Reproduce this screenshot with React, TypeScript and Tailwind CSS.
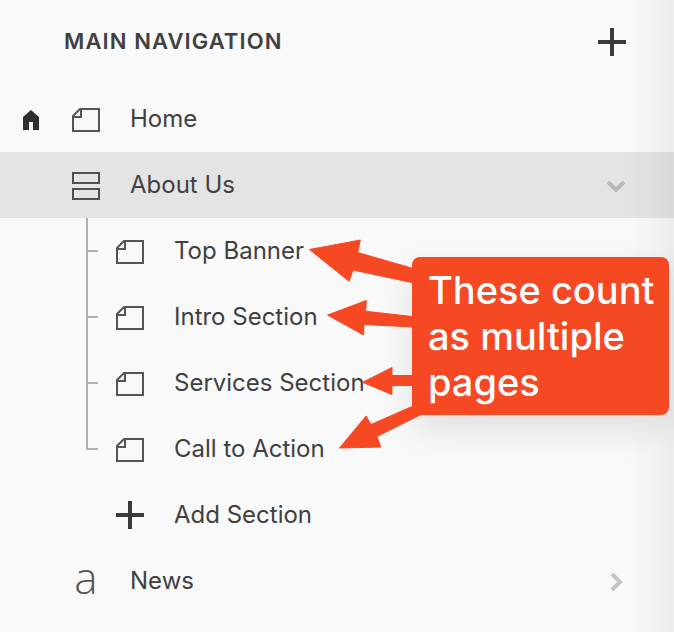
import { useState } from 'react';

type Section = { id: string; title: string };

const sections: Section[] = [
  { id: 'top-banner', title: 'Top Banner' },
  { id: 'intro', title: 'Intro Section' },
  { id: 'services', title: 'Services Section' },
  { id: 'cta', title: 'Call to Action' },
];

function PageIcon() {
  return (
    <svg className="h-7 w-7 shrink-0" viewBox="0 0 28 28" fill="none" stroke="#555" strokeWidth="2" aria-hidden="true">
      <path d="M8 3H27V25H1V10Z" />
      <path d="M9 3V11H1" />
    </svg>
  );
}

function IndexIcon() {
  return (
    <svg className="h-7 w-7 shrink-0" viewBox="0 0 28 28" fill="none" stroke="#505050" strokeWidth="2" aria-hidden="true">
      <rect x="1" y="1" width="26" height="10" />
      <rect x="1" y="17" width="26" height="10" />
    </svg>
  );
}

function PlusIcon() {
  return (
    <svg className="h-7 w-7 shrink-0" viewBox="0 0 28 28" fill="none" stroke="#3a3a3a" strokeWidth="4" aria-hidden="true">
      <path d="M14 0V28M0 14H28" />
    </svg>
  );
}

function HomeIcon() {
  return (
    <svg className="h-5 w-4" viewBox="0 0 16 20" fill="#2e2e2e" aria-label="Homepage">
      <path d="M8 0L16 7V20H10V12H6V20H0V7Z" />
    </svg>
  );
}

// Vertical trunk with a short branch pointing at the section
function Branch({ last }: { last: boolean }) {
  return (
    <div className="flex w-3 shrink-0 flex-col self-stretch">
      <div className="h-[34px] border-b-2 border-l-2 border-[#b0b0b0]" />
      {!last && <div className="flex-1 border-l-2 border-[#b0b0b0]" />}
    </div>
  );
}

function Callout() {
  return (
    <div className="pointer-events-none absolute left-[308px] top-[236px] flex items-start">
      <p className="order-2 mt-[21px] w-[257px] rounded-lg bg-[#f64823] py-[10px] pr-2 pl-4 font-[Inter,sans-serif] text-[38px] leading-[46px] font-medium text-white shadow-[0_14px_36px_rgba(0,0,0,0.1)]">
        These count as multiple pages
      </p>
      <svg
        className="relative order-1 h-[216px] w-[104px] shrink-0 overflow-visible"
        viewBox="0 0 104 216"
        fill="#f64823"
        stroke="#f64823"
        strokeLinejoin="round"
        aria-hidden="true"
      >
        <path d="M1.5 13.5L52.3 4L49.7 16.5L106 32.7V47L45 34L41 45.3Z" />
        <path d="M19.5 79L58.3 64.5L57.7 75.3L106 80.7V91L56 88.5L55.5 99Z" />
        <path d="M54.5 146.3L84 131.5V139.5H106V149.5H84V158.5Z" />
        <path d="M31.5 212L58 180L63 188.5L104 170.5L113 178.5L69 200.5L72.7 211Z" />
      </svg>
    </div>
  );
}

export default function App() {
  const [open, setOpen] = useState(true);

  return (
    <div className="relative min-h-screen bg-[#f9f9f9] pb-[18px] font-[Inter,sans-serif] text-[24px] leading-8 text-[#404040]">
      <header className="flex h-[86px] items-center justify-between pr-12 pb-1 pl-16">
        <h1 className="text-[22px] font-semibold tracking-wider">MAIN NAVIGATION</h1>
        <button type="button" aria-label="Add page" className="pt-[2px]">
          <PlusIcon />
        </button>
      </header>

      <nav>
        <ul>
          <li className="flex h-[66px] items-center pt-[2px]">
            <span className="flex w-[72px] pl-[23px]">
              <HomeIcon />
            </span>
            <a href="#home" className="flex items-center gap-[30px]">
              <PageIcon />
              <span className="pb-[2px]">Home</span>
            </a>
          </li>

          <li>
            <button
              type="button"
              aria-expanded={open}
              onClick={() => setOpen(!open)}
              className="flex h-[66px] w-full items-center gap-[30px] bg-[#e4e4e4] pt-[2px] pr-12 pl-[72px] text-left"
            >
              <IndexIcon />
              <span className="flex-1 pb-[2px]">About Us</span>
              <svg className="h-5 w-5" viewBox="0 0 20 20" fill="none" stroke="#b8b8b8" strokeWidth="4" aria-hidden="true">
                <path d="M2 6L10 14L18 6" />
              </svg>
            </button>

            {open && (
              <ul>
                {sections.map((section, i) => (
                  <li key={section.id} className="flex h-[66px] items-center pl-[86px]">
                    <Branch last={i === sections.length - 1} />
                    <a href={`#${section.id}`} className="ml-[18px] flex items-center gap-[30px] pt-[2px]">
                      <PageIcon />
                      <span className="pb-[2px]">{section.title}</span>
                    </a>
                  </li>
                ))}
                <li className="flex h-[66px] items-center pl-[116px]">
                  <button type="button" className="flex items-center gap-[30px]">
                    <PlusIcon />
                    <span>Add Section</span>
                  </button>
                </li>
              </ul>
            )}
          </li>

          <li>
            <a href="#news" className="flex h-[66px] items-center gap-[30px] pt-[2px] pr-12 pl-[72px]">
              <span
                aria-hidden="true"
                className="w-7 pb-[10px] text-center font-['Open_Sans',sans-serif] text-[44px] leading-[50px] font-light text-[#555]"
              >
                a
              </span>
              <span className="flex-1 pb-[2px]">News</span>
              <svg className="h-5 w-5" viewBox="0 0 20 20" fill="none" stroke="#c4c4c4" strokeWidth="4" aria-hidden="true">
                <path d="M6 2L14 10L6 18" />
              </svg>
            </a>
          </li>
        </ul>
      </nav>

      {/* soft shade along the panel's right edge */}
      <div className="pointer-events-none absolute inset-y-0 right-0 w-12 bg-linear-to-r from-transparent via-black/2 to-black/5" />
      <Callout />
    </div>
  );
}
